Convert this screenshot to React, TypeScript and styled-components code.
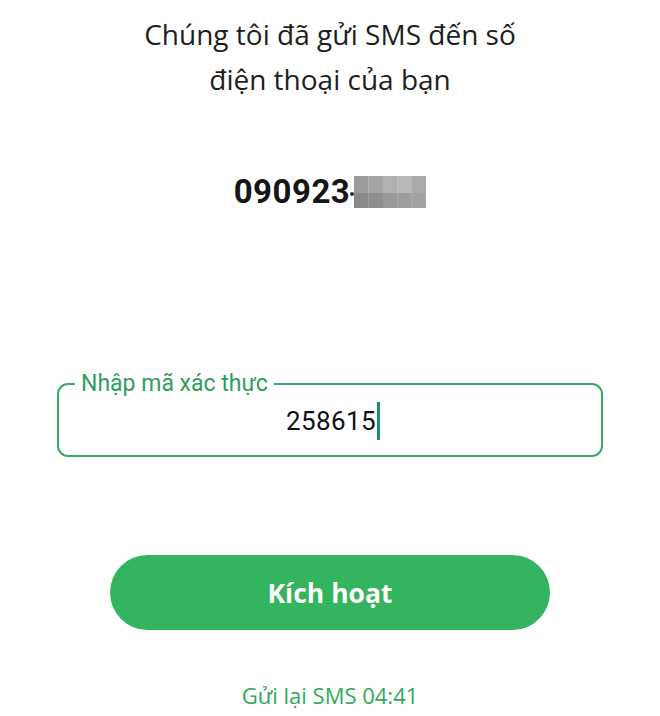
import React from "react";
import styled, { createGlobalStyle } from "styled-components";

const Global = createGlobalStyle`
  html, body { margin: 0; padding: 0; background: #ffffff; }
  * { box-sizing: border-box; }
`;

const Page = styled.div`
  width: 660px;
  height: 716px;
  overflow: hidden;
  display: flex;
  flex-direction: column;
  align-items: stretch;
  background: #ffffff;
`;

const Title = styled.h1`
  margin: 12px 0 0;
  font-family: "Open Sans", sans-serif;
  font-weight: 400;
  font-size: 28px;
  line-height: 45px;
  color: #1e1e1e;
  text-align: center;
`;

const PhoneRow = styled.div`
  margin-top: 70px;
  height: 40px;
  display: flex;
  justify-content: center;
  align-items: center;
`;

const Phone = styled.span`
  font-family: Roboto, sans-serif;
  font-weight: 700;
  font-size: 33px;
  letter-spacing: 0.5px;
  color: #161616;
  line-height: 40px;
`;

const Field = styled.fieldset`
  margin: 158px 57px 0;
  padding: 0;
  border: 2px solid #3aa866;
  border-radius: 11px;
  min-width: 0;
`;

const Legend = styled.legend`
  margin-left: 16px;
  padding: 0 6px;
  font-family: Roboto, sans-serif;
  font-size: 23px;
  line-height: 28px;
  color: #2f9e5c;
`;

const ValueRow = styled.div`
  height: 46px;
  margin-bottom: 11px;
  display: flex;
  justify-content: center;
  align-items: center;
  padding-left: 6px;
`;

const Value = styled.span`
  font-family: Roboto, sans-serif;
  font-size: 26px;
  letter-spacing: 0.4px;
  color: #111;
  line-height: 46px;
`;

const Caret = styled.span`
  display: inline-block;
  width: 3px;
  height: 38px;
  margin-left: 1px;
  background: #1f8a73;
`;

const Button = styled.button`
  margin: 98px 110px 0;
  height: 75px;
  border: none;
  border-radius: 38px;
  background: #34b45f;
  color: #ffffff;
  font-family: "Open Sans", sans-serif;
  font-weight: 700;
  font-size: 26.5px;
  cursor: pointer;
`;

const Resend = styled.div`
  margin-top: 50px;
  text-align: center;
  font-family: "Open Sans", sans-serif;
  font-size: 22px;
  line-height: 30px;
  color: #2faa5c;
`;

const topRow = ["#9c9c9c", "#a4a4a4", "#b1b1b1", "#b9b9b9", "#a9a9a9"];
const bottomRow = ["#898989", "#8f8f8f", "#999999", "#9d9d9d", "#a2a2a2"];

function Pixelated() {
  return (
    <svg width="76" height="33" viewBox="0 0 76 33" style={{ marginLeft: 0 }}>
      <circle cx="2" cy="18" r="2" fill="#333" />
      {topRow.map((c, i) => (
        <rect key={"t" + i} x={4 + i * 14.4} y={0} width={14.6} height={17} fill={c} />
      ))}
      {bottomRow.map((c, i) => (
        <rect key={"b" + i} x={4 + i * 14.4} y={17} width={14.6} height={15} fill={c} />
      ))}
    </svg>
  );
}

export default function App() {
  return (
    <Page>
      <Global />
      <Title>
        Chúng tôi đã gửi SMS đến số
        <br />
        điện thoại của bạn
      </Title>
      <PhoneRow>
        <Phone>090923</Phone>
        <Pixelated />
      </PhoneRow>
      <Field>
        <Legend>Nhập mã xác thực</Legend>
        <ValueRow>
          <Value>258615</Value>
          <Caret />
        </ValueRow>
      </Field>
      <Button>Kích hoạt</Button>
      <Resend>Gửi lại SMS 04:41</Resend>
    </Page>
  );
}
